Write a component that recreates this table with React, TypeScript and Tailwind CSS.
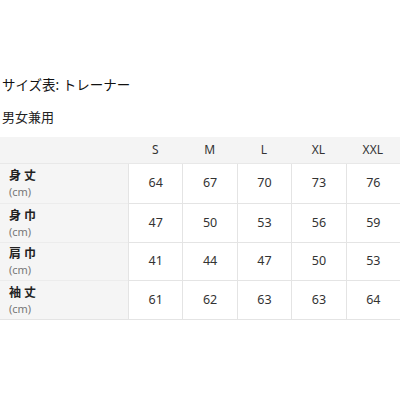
const sizes = ['S', 'M', 'L', 'XL', 'XXL']

const rows = [
  { label: '身 丈', values: [64, 67, 70, 73, 76], h: 'h-[39px]' },
  { label: '身 巾', values: [47, 50, 53, 56, 59], h: 'h-[39px]' },
  { label: '肩 巾', values: [41, 44, 47, 50, 53], h: 'h-[38px]' },
  { label: '袖 丈', values: [61, 62, 63, 63, 64], h: 'h-[39px]' },
]

export default function App() {
  return (
    <div className="w-[400px] h-[400px] bg-white text-[#111] overflow-hidden" style={{ fontFamily: '"Noto Sans", "Noto Sans CJK JP", sans-serif' }}>
      <div className="pt-[73px] pl-[2px]">
        <h1 className="text-[13.5px] leading-6">サイズ表: トレーナー</h1>
        <p className="mt-[8px] text-[13px] leading-6 text-[#222]">男女兼用</p>
      </div>

      <div className="mt-[8px] grid grid-cols-[128px_repeat(5,1fr)] border-b border-[#e4e4e4]">
        <div className="h-[27px] bg-[#f4f4f4] border-b border-[#e8e8e8]" />
        {sizes.map((s) => (
          <div key={s} className="h-[27px] bg-[#f4f4f4] border-b border-[#e8e8e8] flex items-center justify-center text-[12px] text-[#333]">
            {s}
          </div>
        ))}

        {rows.map((r, ri) => (
          <div key={r.label} className="contents">
            <div className={`${r.h} bg-[#f5f5f5] pl-[9px] flex flex-col justify-center ${ri > 0 ? 'border-t border-[#ececec]' : ''}`}>
              <span className="text-[12px] font-bold leading-[16px] text-[#222]">{r.label}</span>
              <span className="text-[11px] leading-[15px] text-[#777]">(cm)</span>
            </div>
            {r.values.map((v, vi) => (
              <div
                key={vi}
                className={`${r.h} flex items-center justify-center text-[12.5px] text-[#333] border-l border-[#e4e4e4] ${ri > 0 ? 'border-t border-[#e4e4e4]' : ''}`}
              >
                {v}
              </div>
            ))}
          </div>
        ))}
      </div>
    </div>
  )
}
